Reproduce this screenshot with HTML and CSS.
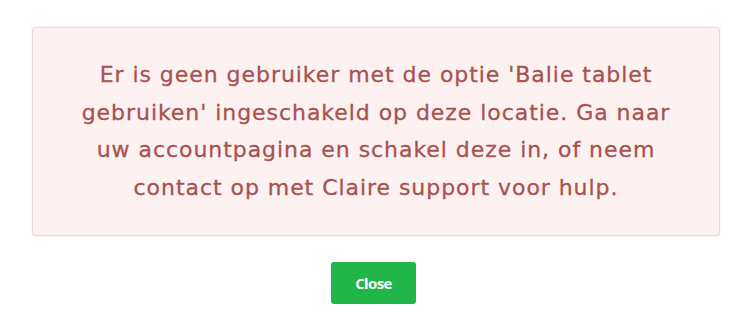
FILE: index.html
```html
<!DOCTYPE html>
<html lang="nl">
<head>
  <meta charset="UTF-8">
  <meta name="viewport" content="width=device-width, initial-scale=1.0">
  <title>Balie tablet</title>
  <link rel="stylesheet" href="styles.css">
</head>
<body>
  <div class="dialog">
    <div class="alert">
      Er is geen gebruiker met de optie 'Balie tablet<br>
      gebruiken' ingeschakeld op deze locatie. Ga naar<br>
      uw accountpagina en schakel deze in, of neem<br>
      contact op met Claire support voor hulp.
    </div>
    <div class="actions">
      <button class="btn-close">Close</button>
    </div>
  </div>
</body>
</html>
```

FILE: styles.css
```css
body {
  margin: 0;
  background: #fff;
  font-family: "DejaVu Sans", Arial, sans-serif;
}
.dialog {
  padding: 27px 36px 0 32px;
}
.alert {
  background: #fdf1f1;
  border: 1px solid #f2d5d5;
  border-radius: 3px;
  color: #a9524f;
  font-size: 22px;
  letter-spacing: 0.95px;
  line-height: 37.5px;
  -webkit-text-stroke: 0.3px #a9524f;
  text-align: center;
  padding: 28px 10px 29px;
  box-shadow: 0 0 2px rgba(230, 180, 180, 0.4);
}
.actions {
  display: flex;
  justify-content: center;
  padding-top: 26px;
}
.btn-close {
  background: #22b54a;
  color: #fff;
  border: none;
  border-radius: 3px;
  width: 85px;
  height: 42px;
  margin-right: 5px;
  font-family: "Open Sans", Arial, sans-serif;
  font-weight: 700;
  font-size: 15px;
  letter-spacing: -0.6px;
}
```
